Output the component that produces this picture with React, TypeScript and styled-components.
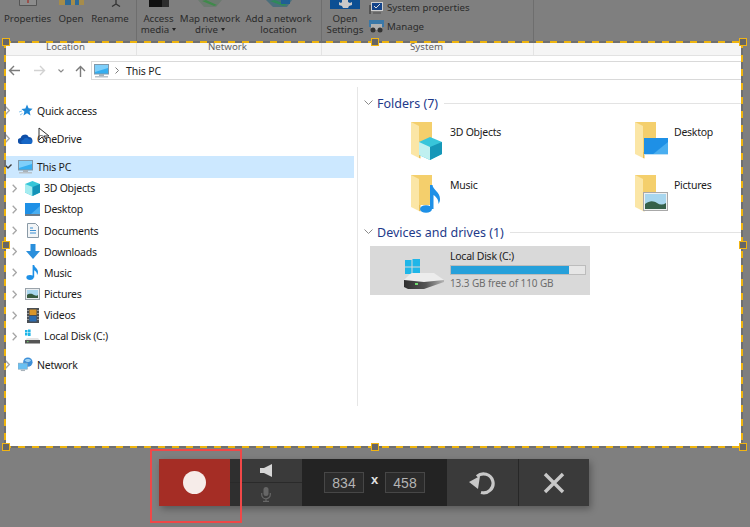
import React from 'react';
import styled, { createGlobalStyle } from 'styled-components';

const GlobalStyle = createGlobalStyle`
  html, body {
    margin: 0;
    padding: 0;
    background: #7f7f7f;
  }
  body {
    width: 750px;
    height: 527px;
    overflow: hidden;
    font-family: "Noto Sans", "Open Sans", sans-serif;
  }
`;

const Page = styled.div`
  width: 750px;
  height: 527px;
  background: #7f7f7f;
  overflow: hidden;
`;

/* dimmed ribbon above the capture area */
const Ribbon = styled.div`
  display: flex;
  height: 42px;
  overflow: hidden;
`;

const RibbonGroup = styled.div<{ $width: number; $gap: number }>`
  display: flex;
  gap: ${(p) => p.$gap}px;
  width: ${(p) => p.$width}px;
  height: 42px;
  box-sizing: border-box;
  padding-left: 5px;
  border-right: 1px solid #6e6e6e;
`;

const RibbonItem = styled.div<{ $width: number }>`
  width: ${(p) => p.$width}px;
  flex: none;
  display: flex;
  flex-direction: column;
  align-items: center;
  font-size: 9.7px;
  line-height: 11px;
  color: #2b2b2b;
  text-align: center;
  white-space: nowrap;
`;

const RibbonIconSlot = styled.div`
  height: 12.5px;
  display: flex;
  justify-content: center;
  align-items: flex-start;
`;

const RenameGlyph = styled.svg`
  margin-left: 12px;
`;

const Caret = styled.span`
  display: inline-block;
  margin-left: 3px;
  border-left: 2.5px solid transparent;
  border-right: 2.5px solid transparent;
  border-top: 3px solid #222;
  vertical-align: 2px;
`;

const SideList = styled.div`
  display: flex;
  flex-direction: column;
  gap: 6px;
  padding-top: 1px;
`;

const SideRow = styled.div`
  display: flex;
  align-items: center;
  gap: 3px;
  font-size: 9.7px;
  line-height: 13px;
  color: #2b2b2b;
  white-space: nowrap;
`;

/* capture selection */
const Capture = styled.div`
  position: relative;
  margin-left: 5px;
  width: 737px;
  height: 405px;
  background: #fff;
`;

const DashedEdge = styled.div`
  position: absolute;
  inset: -1px;
  pointer-events: none;
  z-index: 3;
  background:
    repeating-linear-gradient(90deg, #eeb40e 0 7px, #6f6f6f 7px 14px) top left / 100% 2px no-repeat,
    repeating-linear-gradient(90deg, #eeb40e 0 7px, #6f6f6f 7px 14px) bottom left / 100% 2px no-repeat,
    repeating-linear-gradient(180deg, #eeb40e 0 7px, #6f6f6f 7px 14px) top left / 2px 100% no-repeat,
    repeating-linear-gradient(180deg, #eeb40e 0 7px, #6f6f6f 7px 14px) top right / 2px 100% no-repeat;
`;

const Handle = styled.div<{ $x: string; $y: string }>`
  position: absolute;
  left: ${(p) => p.$x};
  top: ${(p) => p.$y};
  width: 6px;
  height: 6px;
  margin: -4px 0 0 -3px;
  box-sizing: content-box;
  border: 1px solid #f0b414;
  background: #666;
  z-index: 4;
`;

const GroupLabels = styled.div`
  display: flex;
  height: 13px;
  background: #f5f5f5;
  border-bottom: 1px solid #e2e2e2;
`;

const GroupLabel = styled.div<{ $width: number; $shift: number }>`
  width: ${(p) => p.$width}px;
  box-sizing: border-box;
  padding-right: ${(p) => p.$shift}px;
  border-right: 1px solid #e4e4e4;
  text-align: center;
  font-size: 9.7px;
  line-height: 10px;
  color: #5f5f5f;
`;

const NavBar = styled.div`
  display: flex;
  align-items: center;
  height: 19px;
  margin-top: 5px;
`;

const NavButtons = styled.div`
  width: 86px;
  flex: none;
  display: flex;
  align-items: center;
  height: 100%;
`;

const NavSlot = styled.div<{ $width: number }>`
  width: ${(p) => p.$width}px;
  flex: none;
  display: flex;
  justify-content: center;
`;

const AddressBar = styled.div`
  flex: 1;
  height: 100%;
  box-sizing: border-box;
  border-top: 1px solid #d9d9d9;
  border-bottom: 1px solid #d9d9d9;
  border-left: 1px solid #d9d9d9;
  display: flex;
  align-items: center;
  padding-left: 2px;
  gap: 6px;
  font-size: 10.5px;
  letter-spacing: -0.1px;
  color: #1c1c1c;
`;

const AddressChevron = styled.svg`
  margin-right: 1px;
`;

const Panes = styled.div`
  display: flex;
  margin-top: 7px;
  height: 319px;
`;

const NavPane = styled.div`
  position: relative;
  width: 352px;
  flex: none;
  box-sizing: border-box;
  padding-top: 13px;
`;

const TreeRow = styled.div<{ $level: number; $gap: number; $selected?: boolean }>`
  display: flex;
  align-items: center;
  height: 21.2px;
  margin-top: ${(p) => p.$gap}px;
  margin-right: 3px;
  padding-left: ${(p) => p.$level * 7}px;
  background: ${(p) => (p.$selected ? '#cce8ff' : 'transparent')};
  font-size: 10.5px;
  letter-spacing: -0.25px;
  color: #1c1c1c;
  white-space: nowrap;
`;

const TreeChevron = styled.div`
  width: 13px;
  flex: none;
  display: flex;
  align-items: center;
`;

const DarkChevron = styled.svg`
  margin-left: -1px;
`;

const TreeIconSlot = styled.div`
  width: 15px;
  height: 15px;
  flex: none;
  margin-right: 4px;
  display: flex;
  align-items: center;
  justify-content: center;
`;

const CursorMark = styled.svg`
  position: absolute;
  left: 33px;
  top: 40px;
  z-index: 2;
`;

const ContentPane = styled.div`
  flex: 1;
  border-left: 1px solid #e6e6e6;
  box-sizing: border-box;
  padding-top: 8px;
`;

const SectionHeader = styled.div`
  display: flex;
  align-items: center;
  height: 16px;
  padding-left: 6px;
  font-size: 12.5px;
  color: #1e3a8a;
  white-space: nowrap;
`;

const SectionRule = styled.div`
  flex: 1;
  height: 1px;
  margin-left: 6px;
  background: #e3e3e3;
`;

const HeaderChevron = styled.svg`
  margin-right: 4px;
  flex: none;
`;

const FolderGrid = styled.div`
  display: grid;
  grid-template-columns: 224px 1fr;
  grid-auto-rows: 53px;
  margin: 11px 0 0 52px;
  height: 102px;
`;

const FolderTile = styled.div`
  display: flex;
  gap: 6px;
`;

const FolderName = styled.div`
  font-size: 10.5px;
  letter-spacing: -0.25px;
  line-height: 14px;
  padding-top: 3px;
  color: #1c1c1c;
`;

const DriveTile = styled.div`
  display: flex;
  width: 220px;
  height: 49px;
  margin: 6px 0 0 12px;
  background: #d9d9d9;
`;

const DriveIconSlot = styled.div`
  width: 80px;
  flex: none;
  padding: 13px 0 0 34px;
  box-sizing: border-box;
`;

const DriveInfo = styled.div`
  flex: 1;
  padding-top: 3px;
`;

const DriveName = styled.div`
  font-size: 10.5px;
  letter-spacing: -0.25px;
  line-height: 14px;
  color: #1c1c1c;
`;

const DriveBar = styled.div`
  width: 136px;
  height: 10px;
  box-sizing: border-box;
  border: 1px solid #bcbcbc;
  background: #e6e6e6;
  margin-top: 2px;
`;

const DriveFill = styled.div`
  height: 100%;
  background: #26a0da;
`;

const DriveFree = styled.div`
  font-size: 10px;
  letter-spacing: -0.1px;
  line-height: 15px;
  color: #6d6d6d;
  margin-top: 1px;
`;

/* recorder toolbar */
const Toolbar = styled.div`
  display: flex;
  width: 430px;
  height: 47px;
  margin: 12px 0 0 159px;
  box-shadow: 2px 3px 7px rgba(0, 0, 0, 0.3);
`;

const RecordButton = styled.div`
  position: relative;
  width: 71px;
  flex: none;
  background: #a52d25;
  display: flex;
  align-items: center;
  justify-content: center;
`;

const RecordDot = styled.div`
  width: 23px;
  height: 23px;
  border-radius: 50%;
  background: #f6ece9;
`;

const RecordFrame = styled.div`
  position: absolute;
  left: -9px;
  top: -10px;
  width: 92px;
  height: 74px;
  box-sizing: border-box;
  border: 2.5px solid #f04848;
  z-index: 2;
`;

const AudioColumn = styled.div`
  width: 72px;
  flex: none;
  display: flex;
  flex-direction: column;
  background: linear-gradient(90deg, #2f2f2f 0 10px, #3a3a3a 10px);
`;

const AudioButton = styled.div`
  flex: 1;
  display: flex;
  align-items: center;
  justify-content: center;
  & + & {
    border-top: 1px solid #2a2a2a;
  }
`;

const SizeBox = styled.div`
  width: 145px;
  flex: none;
  display: flex;
  align-items: center;
  padding-left: 22px;
  box-sizing: border-box;
  background: #232323;
`;

const SizeInput = styled.div`
  width: 40px;
  height: 21px;
  box-sizing: border-box;
  border: 1px solid #474747;
  background: #2b2b2b;
  color: #b4b4b4;
  font-family: "Liberation Sans", sans-serif;
  font-size: 14px;
  line-height: 20px;
  text-align: center;
`;

const SizeTimes = styled.div`
  width: 21px;
  text-align: center;
  color: #e0e0e0;
  font-family: "Liberation Sans", sans-serif;
  font-size: 13px;
  font-weight: bold;
  margin-top: -6px;
`;

const ToolButton = styled.div<{ $divider?: boolean }>`
  flex: 1;
  display: flex;
  align-items: center;
  justify-content: center;
  background: #3a3a3a;
  border-left: ${(p) => (p.$divider ? '1px solid #272727' : 'none')};
`;

const Icon3D = () => (
  <svg width="15" height="15" viewBox="0 0 15 15">
    <path d="M7.5 0 15 3v8.5L7.5 15 0 11.5V3z" fill="#35c6d8" />
    <path d="M0 3l7.5 3v9L0 11.5z" fill="#a5ecf0" />
    <path d="M7.5 6 15 3v8.5L7.5 15z" fill="#1493b8" />
  </svg>
);

const IconDesktop = () => (
  <svg width="15" height="13" viewBox="0 0 15 13">
    <rect x="0" y="0" width="15" height="12" fill="#1e90e6" />
    <rect x="0" y="11" width="15" height="2" fill="#6b7d8c" />
    <path d="M6 11 15 3v8z" fill="#4aaef0" />
  </svg>
);

const IconDoc = () => (
  <svg width="12" height="15" viewBox="0 0 12 15">
    <path d="M.5.5h8l3 3v11H.5z" fill="#f2f5f7" stroke="#8a9aa6" />
    <path d="M3 5h3M3 7.5h6M3 10h6" stroke="#3d8fd1" strokeWidth="1" />
  </svg>
);

const IconDownloads = () => (
  <svg width="14" height="15" viewBox="0 0 14 15">
    <path d="M4.5 0h5v7H14l-7 8-7-8h4.5z" fill="#2a8fdc" />
  </svg>
);

const IconMusic = ({ size = 15 }: { size?: number }) => (
  <svg width={size} height={size} viewBox="0 0 15 15">
    <ellipse cx="5" cy="12.5" rx="3.6" ry="2.4" fill="#1e90e6" />
    <path d="M7.6 12.5V0h1.6c.4 2.6 3.8 3.4 3.8 7 0 1.2-.4 2.2-1 3 .2-2.6-1.4-4-2.8-4.8v7.3z" fill="#1e90e6" />
  </svg>
);

const IconPictures = () => (
  <svg width="15" height="12" viewBox="0 0 15 12">
    <rect x=".5" y=".5" width="14" height="11" fill="#e9edf0" stroke="#9aa3aa" />
    <rect x="2" y="2" width="11" height="8" fill="#a8d6ee" />
    <path d="M2 7c3-2 5-1 7 0s3 1 4 0v3H2z" fill="#35593f" />
  </svg>
);

const IconVideos = () => (
  <svg width="12" height="15" viewBox="0 0 12 15">
    <rect width="12" height="15" fill="#4a4f55" />
    <rect x="2.5" y="1.5" width="7" height="5.5" fill="#d9962b" />
    <rect x="2.5" y="8" width="7" height="5.5" fill="#2c6cb0" />
    <path d="M1 2v1M1 5v1M1 8v1M1 11v1M11 2v1M11 5v1M11 8v1M11 11v1" stroke="#ddd" />
  </svg>
);

const IconDisk = () => (
  <svg width="15" height="15" viewBox="0 0 15 15">
    <path d="M0 1h2.5v2.5H0zM3 .5h2.6v3H3zM0 4h2.5v2.5H0zM3 4h2.6v3H3z" fill="#1fb6e8" />
    <path d="M2 9h11l2 2.5H0z" fill="#e4e4e4" />
    <rect x="0" y="11" width="15" height="3.5" fill="#555" />
    <rect x="2" y="12.2" width="1.5" height="1" fill="#6fdc6f" />
  </svg>
);

const IconPC = () => (
  <svg width="15" height="14" viewBox="0 0 15 14">
    <rect x=".5" y=".5" width="14" height="9.5" fill="#35aef0" stroke="#7f98aa" />
    <path d="M1 1h13v3L1 8z" fill="#7ecffa" />
    <rect x="5" y="10" width="5" height="2" fill="#a8b3bb" />
    <rect x="1" y="12" width="13" height="1.5" fill="#b8c2c9" />
  </svg>
);

const IconStar = () => (
  <svg width="14" height="14" viewBox="0 0 14 14">
    <path d="M8 .5l1.6 3.8 4 .4-3 2.7.9 4-3.5-2.1L4.5 11.6l.9-4-3-2.7 4-.4z" fill="#1e88d8" />
    <path d="M0 8l3-1M1 11l2.5-1.5" stroke="#8cc8f0" strokeWidth="1" />
  </svg>
);

const IconCloud = () => (
  <svg width="15" height="10" viewBox="0 0 15 10">
    <path d="M3 10A3 3 0 0 1 2.6 4 4.4 4.4 0 0 1 10.8 3 3.6 3.6 0 0 1 12 10z" fill="#0f4fa8" />
    <path d="M5 10a2 2 0 0 1 .3-4A3 3 0 0 1 11 5.500a2.300 2.300 0 0 1 1.800 4.500z" fill="#1667c6" />
  </svg>
);

const IconNetwork = () => (
  <svg width="16" height="15" viewBox="0 0 16 15">
    <circle cx="10.5" cy="5" r="5" fill="#3d8fd8" />
    <path d="M7 3c2-2 5-2 7 0-1 2-5 3-7 0z" fill="#9bd0f2" />
    <rect x="0" y="6" width="10" height="6.500" fill="#69c0f2" stroke="#8fa3b2" strokeWidth=".6" />
    <rect x="3" y="13" width="4.500" height="1.500" fill="#a8b3bb" />
  </svg>
);

const iconByName: Record<string, React.ReactNode> = {
  'Quick access': <IconStar />,
  OneDrive: <IconCloud />,
  'This PC': <IconPC />,
  '3D Objects': <Icon3D />,
  Desktop: <IconDesktop />,
  Documents: <IconDoc />,
  Downloads: <IconDownloads />,
  Music: <IconMusic />,
  Pictures: <IconPictures />,
  Videos: <IconVideos />,
  'Local Disk (C:)': <IconDisk />,
  Network: <IconNetwork />,
};

const treeRows = [
  { name: 'Quick access', level: 0, gap: 0 },
  { name: 'OneDrive', level: 0, gap: 7 },
  { name: 'This PC', level: 0, gap: 7, selected: true },
  { name: '3D Objects', level: 1, gap: 0 },
  { name: 'Desktop', level: 1, gap: 0 },
  { name: 'Documents', level: 1, gap: 0 },
  { name: 'Downloads', level: 1, gap: 0 },
  { name: 'Music', level: 1, gap: 0 },
  { name: 'Pictures', level: 1, gap: 0 },
  { name: 'Videos', level: 1, gap: 0 },
  { name: 'Local Disk (C:)', level: 1, gap: 0 },
  { name: 'Network', level: 0, gap: 7 },
];

const ChevronRight = () => (
  <svg width="5" height="9" viewBox="0 0 5 9">
    <path d="M.7.7 4.300 4.500.7 8.300" fill="none" stroke="#a6a6a6" strokeWidth="1.300" />
  </svg>
);

const ChevronDownDark = () => (
  <DarkChevron width="8" height="5" viewBox="0 0 8 5">
    <path d="M.5.5 4 4 7.500.5" fill="none" stroke="#3a3a3a" strokeWidth="1.400" />
  </DarkChevron>
);

const FolderBase = ({ children }: { children: React.ReactNode }) => (
  <svg width="34" height="40" viewBox="0 0 34 40">
    <path d="M1 0h21v30H1z" fill="#f4cf6c" />
    <path d="M1 0 9 4v32L1 32z" fill="#fbe6a6" />
    <path d="M9 4v32l1.500.5V30H9z" fill="#e8bd55" />
    {children}
  </svg>
);

const folders: { name: string; art: React.ReactNode }[] = [
  {
    name: '3D Objects',
    art: (
      <>
        <path d="M20 15l12 5v12l-12 6-11-5V20z" fill="#38c5da" />
        <path d="M9 20l11 5v13l-11-5z" fill="#bff0f0" />
        <path d="M20 25l12-5v12l-12 6z" fill="#1697b8" />
      </>
    ),
  },
  {
    name: 'Desktop',
    art: (
      <>
        <rect x="10" y="16" width="24" height="17" fill="#1e90e6" />
        <path d="M18 33 34 20v13z" fill="#4aaef0" />
        <rect x="10" y="32" width="24" height="1" fill="#bfe0f5" />
      </>
    ),
  },
  {
    name: 'Music',
    art: (
      <>
        <ellipse cx="16" cy="34" rx="6" ry="3.800" fill="#1e90e6" />
        <path d="M20 34V10h2.500c.5 5 7.500 7 7.500 14 0 2-.5 3.500-1.500 5 .3-5-3-7.500-5-9v14z" fill="#1e90e6" />
      </>
    ),
  },
  {
    name: 'Pictures',
    art: (
      <>
        <rect x="9.500" y="17.500" width="24" height="18" fill="#eef0f1" stroke="#a8a8a8" />
        <rect x="11" y="19" width="21" height="15" fill="#a8d6ee" />
        <path d="M11 29c5-4 9-3 12-1s6 2 9 0v6H11z" fill="#36604a" />
      </>
    ),
  },
];

const DriveArt = () => (
  <svg width="40" height="30" viewBox="0 0 40 30">
    <defs>
      <linearGradient id="driveFront" x1="0" x2="1" y1="0" y2="0">
        <stop offset="0" stopColor="#2e2e2e" />
        <stop offset="0.55" stopColor="#555" />
        <stop offset="1" stopColor="#b5b5b5" />
      </linearGradient>
    </defs>
    <path d="M1 1h6.500v6.500H1zM8.500 0H16v7.500H8.500zM1 8.500h6.500V15H1zM8.500 8.500H16V16H8.500z" fill="#1fb6e8" />
    <path d="M6 15l2-1h22l10 7v2H0v-2z" fill="#ececec" />
    <path d="M0 21l20 2 20-2v2L20 30H4l-4-2z" fill="url(#driveFront)" />
    <rect x="11" y="24" width="3" height="2" fill="#6fdc6f" />
  </svg>
);

export default function App() {
  return (
    <Page>
      <GlobalStyle />
      <Ribbon>
        <RibbonGroup $width={137} $gap={9}>
          <RibbonItem $width={45}>
            <RibbonIconSlot>
              <svg width="18" height="6" viewBox="0 0 18 6">
                <path d="M.5 0v5.500h17V0" fill="#8c8c8c" stroke="#555" />
                <path d="M9 0v3" stroke="#a32b22" strokeWidth="1.200" />
              </svg>
            </RibbonIconSlot>
            Properties
          </RibbonItem>
          <RibbonItem $width={24}>
            <RibbonIconSlot>
              <svg width="25" height="5" viewBox="0 0 25 5">
                <rect width="25" height="5" fill="#a68c4a" />
                <rect x="6" width="6" height="5" fill="#2d6a99" />
                <rect x="16" width="4" height="5" fill="#2d6a99" />
              </svg>
            </RibbonIconSlot>
            Open
          </RibbonItem>
          <RibbonItem $width={36}>
            <RibbonIconSlot>
              <RenameGlyph width="10" height="7" viewBox="0 0 10 7">
                <path d="M5 0v4M1 6.500 5 4l4 2.500" fill="none" stroke="#333" strokeWidth="1.300" />
              </RenameGlyph>
            </RibbonIconSlot>
            Rename
          </RibbonItem>
        </RibbonGroup>
        <RibbonGroup $width={185} $gap={5}>
          <RibbonItem $width={33}>
            <RibbonIconSlot>
              <svg width="20" height="7" viewBox="0 0 20 7">
                <rect width="20" height="7" fill="#111" />
                <rect x="13" width="7" height="7" fill="#2d2d2d" />
              </svg>
            </RibbonIconSlot>
            Access
            <span>
              media
              <Caret />
            </span>
          </RibbonItem>
          <RibbonItem $width={60}>
            <RibbonIconSlot>
              <svg width="28" height="7" viewBox="0 0 28 7">
                <path d="M2 0h24l-6 7H8z" fill="#6c7a70" />
                <path d="M6 1l12 5 3-1L10 0z" fill="#3f8a4a" />
              </svg>
            </RibbonIconSlot>
            Map network
            <span>
              drive
              <Caret />
            </span>
          </RibbonItem>
          <RibbonItem $width={67}>
            <RibbonIconSlot>
              <svg width="30" height="7" viewBox="0 0 30 7">
                <path d="M2 0h26l-5 7H9z" fill="#4b6f7c" />
                <path d="M6 1l13 5 4-1L11 0z" fill="#2f8a5a" />
                <rect x="17" width="9" height="4" fill="#1f5f94" />
              </svg>
            </RibbonIconSlot>
            Add a network
            <span>location</span>
          </RibbonItem>
        </RibbonGroup>
        <RibbonGroup $width={212} $gap={6}>
          <RibbonItem $width={36}>
            <RibbonIconSlot>
              <svg width="30" height="9" viewBox="0 0 30 9">
                <rect width="30" height="9" fill="#0c4f93" />
                <path d="M12 0h6v2l2 1 2-1v3l-3 1-1 2h-5l-1-2-3-1V2l2 1 1-1z" fill="#c9c9c9" />
              </svg>
            </RibbonIconSlot>
            Open
            <span>Settings</span>
          </RibbonItem>
          <SideList>
            <SideRow>
              <svg width="15" height="12" viewBox="0 0 15 12">
                <rect x="2" y="0" width="12" height="9" fill="#d0d0d0" />
                <rect x="3" y="1" width="10" height="7" fill="#14448a" />
                <path d="M5 4l2 2 4-4" stroke="#ddd" fill="none" />
                <rect x="0" y="3" width="2" height="9" fill="#555" />
                <rect x="4" y="10" width="8" height="2" fill="#666" />
              </svg>
              System properties
            </SideRow>
            <SideRow>
              <svg width="15" height="13" viewBox="0 0 15 13">
                <rect width="15" height="7" fill="#3a78a8" />
                <rect x="2" y="4" width="11" height="6" fill="#b0b0b0" />
                <circle cx="4" cy="10" r="2.500" fill="#333" />
                <circle cx="11" cy="10" r="2.500" fill="#333" />
              </svg>
              Manage
            </SideRow>
          </SideList>
        </RibbonGroup>
      </Ribbon>

      <Capture>
        <DashedEdge />
        <Handle $x="0" $y="0" />
        <Handle $x="50%" $y="0" />
        <Handle $x="100%" $y="0" />
        <Handle $x="0" $y="50%" />
        <Handle $x="100%" $y="50%" />
        <Handle $x="0" $y="100%" />
        <Handle $x="50%" $y="100%" />
        <Handle $x="100%" $y="100%" />

        <GroupLabels>
          <GroupLabel $width={132} $shift={10}>Location</GroupLabel>
          <GroupLabel $width={185} $shift={3}>Network</GroupLabel>
          <GroupLabel $width={212} $shift={2}>System</GroupLabel>
        </GroupLabels>

        <NavBar>
          <NavButtons>
            <NavSlot $width={18}>
              <svg width="12" height="11" viewBox="0 0 12 11">
                <path d="M12 5.500H1.500M6 1 1.500 5.500 6 10" fill="none" stroke="#7b7b7b" strokeWidth="1.400" />
              </svg>
            </NavSlot>
            <NavSlot $width={34}>
              <svg width="12" height="11" viewBox="0 0 12 11">
                <path d="M0 5.500h10.500M6 1l4.500 4.500L6 10" fill="none" stroke="#d2d2d2" strokeWidth="1.400" />
              </svg>
            </NavSlot>
            <NavSlot $width={8}>
              <svg width="6" height="4" viewBox="0 0 6 4">
                <path d="M.5.5 3 3 5.500.5" fill="none" stroke="#8a8a8a" strokeWidth="1.100" />
              </svg>
            </NavSlot>
            <NavSlot $width={30}>
              <svg width="11" height="12" viewBox="0 0 11 12">
                <path d="M5.500 12V1.500M1 6l4.500-4.500L10 6" fill="none" stroke="#7b7b7b" strokeWidth="1.400" />
              </svg>
            </NavSlot>
          </NavButtons>
          <AddressBar>
            <IconPC />
            <AddressChevron width="4" height="7" viewBox="0 0 4 7">
              <path d="M.5.5 3.500 3.500.5 6.500" fill="none" stroke="#7a7a7a" />
            </AddressChevron>
            This PC
          </AddressBar>
        </NavBar>

        <Panes>
          <NavPane>
            <CursorMark width="13" height="15" viewBox="0 0 13 15">
              <path d="M1 1v12l3-3 3 4.500 2-1-3-4.500h5z" fill="#fff" fillOpacity=".4" stroke="#333" />
            </CursorMark>
            {treeRows.map((row) => (
              <TreeRow key={row.name} $level={row.level} $gap={row.gap} $selected={row.selected}>
                <TreeChevron>{row.selected ? <ChevronDownDark /> : <ChevronRight />}</TreeChevron>
                <TreeIconSlot>{iconByName[row.name]}</TreeIconSlot>
                {row.name}
              </TreeRow>
            ))}
          </NavPane>
          <ContentPane>
            <SectionHeader>
              <HeaderChevron width="9" height="6" viewBox="0 0 9 6">
                <path d="M.5.5 4.500 4.500 8.500.5" fill="none" stroke="#8a8a8a" />
              </HeaderChevron>
              Folders (7)
              <SectionRule />
            </SectionHeader>
            <FolderGrid>
              {folders.map((f) => (
                <FolderTile key={f.name}>
                  <FolderBase>{f.art}</FolderBase>
                  <FolderName>{f.name}</FolderName>
                </FolderTile>
              ))}
            </FolderGrid>
            <SectionHeader>
              <HeaderChevron width="9" height="6" viewBox="0 0 9 6">
                <path d="M.5.5 4.500 4.500 8.500.5" fill="none" stroke="#8a8a8a" />
              </HeaderChevron>
              Devices and drives (1)
              <SectionRule />
            </SectionHeader>
            <DriveTile>
              <DriveIconSlot>
                <DriveArt />
              </DriveIconSlot>
              <DriveInfo>
                <DriveName>Local Disk (C:)</DriveName>
                <DriveBar>
                  <DriveFill style={{ width: `${((110 - 13.3) / 110) * 100}%` }} />
                </DriveBar>
                <DriveFree>13.3 GB free of 110 GB</DriveFree>
              </DriveInfo>
            </DriveTile>
          </ContentPane>
        </Panes>
      </Capture>

      <Toolbar>
        <RecordButton>
          <RecordDot />
          <RecordFrame />
        </RecordButton>
        <AudioColumn>
          <AudioButton>
            <svg width="12" height="13" viewBox="0 0 12 13">
              <path d="M0 4h4l8-4v13L4 9H0z" fill="#d6d6d6" />
            </svg>
          </AudioButton>
          <AudioButton>
            <svg width="10" height="15" viewBox="0 0 10 15">
              <rect x="2.500" y="0" width="5" height="9" rx="2.500" fill="#666" />
              <path d="M.7 6v1.500a4.300 4.300 0 0 0 8.600 0V6M5 12v2M2 14.300h6" fill="none" stroke="#666" strokeWidth="1.200" />
            </svg>
          </AudioButton>
        </AudioColumn>
        <SizeBox>
          <SizeInput>834</SizeInput>
          <SizeTimes>x</SizeTimes>
          <SizeInput>458</SizeInput>
        </SizeBox>
        <ToolButton>
          <svg width="26" height="24" viewBox="0 0 26 24">
            <path d="M8 5.500A9.500 9.500 0 1 1 12 21.500" fill="none" stroke="#c8c8c8" strokeWidth="3.200" />
            <path d="M0 11l11-6-2 13z" fill="#c8c8c8" />
          </svg>
        </ToolButton>
        <ToolButton $divider>
          <svg width="22" height="22" viewBox="0 0 22 22">
            <path d="M2 2l18 18M20 2 2 20" fill="none" stroke="#c8c8c8" strokeWidth="3.400" />
          </svg>
        </ToolButton>
      </Toolbar>
    </Page>
  );
}
